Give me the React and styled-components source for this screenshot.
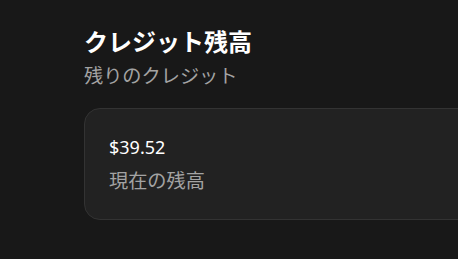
import React from "react";
import styled, { createGlobalStyle } from "styled-components";

const GlobalStyle = createGlobalStyle`
  html, body {
    margin: 0;
    background: #181818;
    overflow: hidden;
  }
  body {
    font-family: "Noto Sans", "Noto Sans CJK JP", sans-serif;
  }
`;

const Page = styled.div`
  width: 458px;
  height: 259px;
  box-sizing: border-box;
  padding: 26px 0 0 84px;
  overflow: hidden;
`;

const Title = styled.h1`
  margin: 0;
  font-size: 24px;
  font-weight: 700;
  line-height: 32px;
  color: #ffffff;
`;

const Subtitle = styled.p`
  margin: 4px 0 0;
  font-size: 19.2px;
  line-height: 28px;
  color: #a3a3a3;
`;

const Card = styled.div`
  margin-top: 18px;
  width: 440px;
  height: 112px;
  box-sizing: border-box;
  padding: 26px 24px;
  border: 1px solid #333333;
  border-radius: 16px;
  background: #222222;
  display: flex;
  flex-direction: column;
  gap: 8px;
`;

const Amount = styled.div`
  font-size: 18px;
  line-height: 24px;
  color: #ffffff;
`;

const Label = styled.div`
  font-size: 19.2px;
  line-height: 27px;
  color: #a3a3a3;
`;

export default function App() {
  return (
    <>
      <GlobalStyle />
      <Page>
        <Title>クレジット残高</Title>
        <Subtitle>残りのクレジット</Subtitle>
        <Card>
          <Amount>$39.52</Amount>
          <Label>現在の残高</Label>
        </Card>
      </Page>
    </>
  );
}
